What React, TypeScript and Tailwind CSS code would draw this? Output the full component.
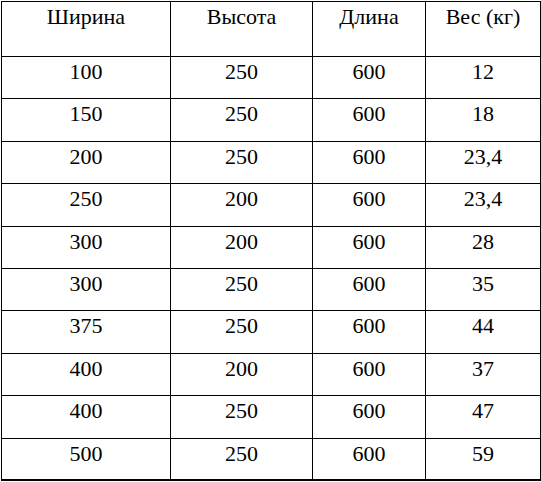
const header = ["Ширина", "Высота", "Длина", "Вес (кг)"];

const rows: { cells: string[]; h: string }[] = [
  { cells: ["100", "250", "600", "12"], h: "h-[42px]" },
  { cells: ["150", "250", "600", "18"], h: "h-[43px]" },
  { cells: ["200", "250", "600", "23,4"], h: "h-[42px]" },
  { cells: ["250", "200", "600", "23,4"], h: "h-[43px]" },
  { cells: ["300", "200", "600", "28"], h: "h-[42px]" },
  { cells: ["300", "250", "600", "35"], h: "h-[42px]" },
  { cells: ["375", "250", "600", "44"], h: "h-[43px]" },
  { cells: ["400", "200", "600", "37"], h: "h-[42px]" },
  { cells: ["400", "250", "600", "47"], h: "h-[43px]" },
  { cells: ["500", "250", "600", "59"], h: "h-[42px]" },
];

export default function App() {
  return (
    <div className="min-h-screen bg-white">
      <div className="ml-px mt-px inline-grid grid-cols-[169px_142px_113px_115px] border-l border-t border-black font-['Liberation_Serif','DejaVu_Serif'] text-[22px] leading-none text-black">
        {header.map((t) => (
          <div key={t} className="h-[55px] border-b border-r border-black pt-[4px] text-center">
            {t}
          </div>
        ))}
        {rows.map((r, i) =>
          r.cells.map((c, j) => (
            <div
              key={`${i}-${j}`}
              className={`${r.h} border-r border-black pt-[4px] text-center ${
                i === rows.length - 1 ? "border-b-2" : "border-b"
              }`}
            >
              {c}
            </div>
          ))
        )}
      </div>
    </div>
  );
}
